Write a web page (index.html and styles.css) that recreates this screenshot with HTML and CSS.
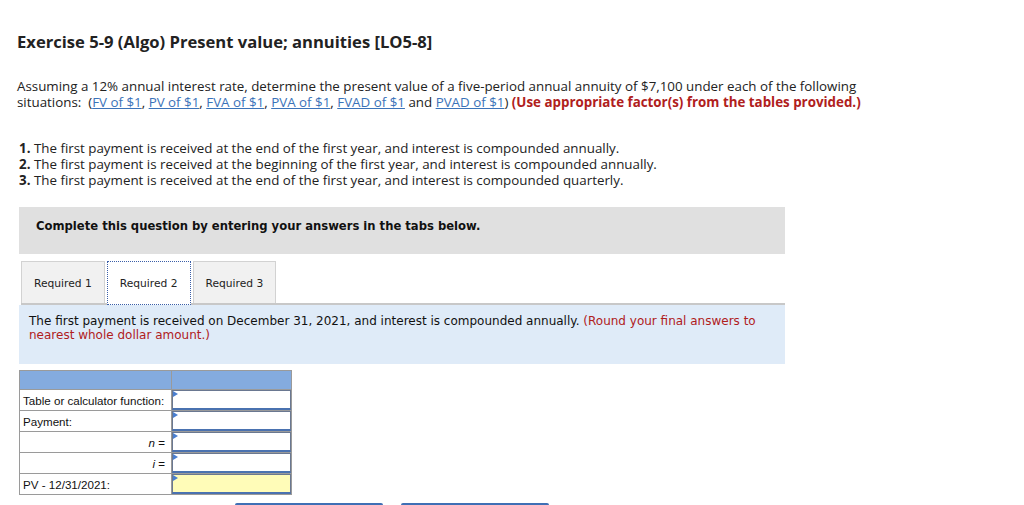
FILE: index.html
```html
<!DOCTYPE html>
<html lang="en">
<head>
<meta charset="UTF-8">
<title>Exercise 5-9</title>
<link rel="stylesheet" href="styles.css">
</head>
<body>
<div class="page">
  <h1 class="title">Exercise 5-9 (Algo) Present value; annuities [LO5-8]</h1>

  <p class="intro">Assuming a 12% annual interest rate, determine the present value of a five-period annual annuity of $7,100 under each of the following situations:&nbsp; (<a href="#">FV of $1</a>, <a href="#">PV of $1</a>, <a href="#">FVA of $1</a>, <a href="#">PVA of $1</a>, <a href="#">FVAD of $1</a> and <a href="#">PVAD of $1</a>) <b class="red">(Use appropriate factor(s) from the tables provided.)</b></p>

  <div class="items">
    <div><b>1.</b> The first payment is received at the end of the first year, and interest is compounded annually.</div>
    <div><b>2.</b> The first payment is received at the beginning of the first year, and interest is compounded annually.</div>
    <div><b>3.</b> The first payment is received at the end of the first year, and interest is compounded quarterly.</div>
  </div>

  <div class="question">
    <div class="instr">Complete this question by entering your answers in the tabs below.</div>

    <div class="tabs">
      <div class="tab">Required 1</div>
      <div class="tab active">Required 2</div>
      <div class="tab">Required 3</div>
    </div>

    <div class="panel">
      The first payment is received on December 31, 2021, and interest is compounded annually. <span class="red">(Round your final answers to nearest whole dollar amount.)</span>
    </div>

    <table class="calc">
      <colgroup><col class="c1"><col class="c2"></colgroup>
      <tr class="head"><td></td><td></td></tr>
      <tr><td>Table or calculator function:</td><td class="inp"><div class="box"></div></td></tr>
      <tr><td>Payment:</td><td class="inp"><div class="box"></div></td></tr>
      <tr><td class="right"><i>n</i> =</td><td class="inp"><div class="box"></div></td></tr>
      <tr><td class="right"><i>i</i> =</td><td class="inp"><div class="box"></div></td></tr>
      <tr><td>PV - 12/31/2021:</td><td class="inp"><div class="box yellow"></div></td></tr>
    </table>

    <div class="buttons">
      <div class="btn"></div>
      <div class="btn"></div>
    </div>
  </div>
</div>
</body>
</html>
```

FILE: styles.css
```css
body{
  margin:0;
  background-color:white;
  color:#222;
  font-family:"Open Sans","Lato",sans-serif;
}
.page{
  padding:31px 0 0 17px;
}
.title{
  margin:0;
  font-size:16.6px;
  line-height:21px;
  font-weight:bold;
  color:#222;
}
.intro{
  margin:26px 0 0 0;
  font-size:13.35px;
  line-height:16px;
  width:880px;
}
.intro a{
  color:#3b73b9;
  text-decoration:underline;
}
.red{
  color:#b0201c;
}
.items{
  margin:30px 0 0 2px;
  font-size:13.35px;
  line-height:16px;
}
.question{
  margin:19px 0 0 2px;
  width:766px;
  font-family:"DejaVu Sans","Verdana",sans-serif;
}
.instr{
  background-color:#e0e0e0;
  height:47px;
  box-sizing:border-box;
  padding:12px 0 0 17px;
  font-size:11.6px;
  font-weight:bold;
  color:#111;
}
.tabs{
  display:flex;
  gap:2px;
  margin:7px 0 0 2px;
  border-bottom:2px solid #c8c8c8;
}
.tab{
  box-sizing:border-box;
  height:42px;
  padding:0 12px;
  display:flex;
  align-items:center;
  padding-top:2px;
  background-color:#f1f1f1;
  border:1px solid #d2d2d2;
  border-bottom:none;
  font-size:10.7px;
  color:#222;
}
.tab.active{
  background-color:white;
  border:1px dotted #3b5fa8;
  margin-bottom:-2px;
  height:44px;
  padding-bottom:2px;
}
.panel{
  background-color:#dfebf8;
  height:59px;
  box-sizing:border-box;
  padding:9px 10px 0 10px;
  font-size:12px;
  line-height:14px;
  color:#111;
}
.calc{
  margin-top:6px;
  width:272px;
  table-layout:fixed;
  border-collapse:collapse;
  border:1px solid #8a8a8a;
  font-family:"Liberation Sans",Arial,sans-serif;
  font-size:11.6px;
  color:#111;
}
.calc .c1{
  width:152px;
}
.calc .c2{
  width:120px;
}
.calc td{
  border:1px solid #9a9a9a;
  height:20px;
  padding:0;
}
.calc td:first-child{
  padding:0 3px;
}
.calc td.right{
  text-align:right;
  padding-right:6px;
}
.calc .head td{
  background-color:#84abdf;
  height:18px;
}
.calc td.inp{
  position:relative;
}
.box{
  height:20px;
  border:1px solid #6a7891;
  border-bottom:2px solid #4a72b0;
  background-color:white;
  box-sizing:border-box;
}
.box.yellow{
  background-color:#fffcb8;
}
.calc td.inp::before{
  content:"";
  position:absolute;
  left:1px;
  top:1px;
  border-left:5px solid #4a7fd0;
  border-top:3px solid transparent;
  border-bottom:3px solid transparent;
}
.buttons{
  display:flex;
  gap:18px;
  margin:8px 0 0 216px;
}
.btn{
  width:148px;
  height:20px;
  border-top:2px solid #3f6fb5;
  border-radius:2px;
  background-color:white;
}
```
